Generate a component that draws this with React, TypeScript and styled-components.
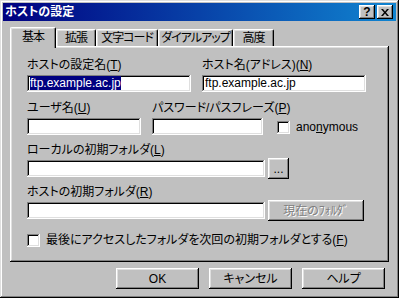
import React from "react";
import styled, { createGlobalStyle, css } from "styled-components";

const GlobalStyle = createGlobalStyle`
  html, body {
    margin: 0;
    padding: 0;
    background: #c0c0c0;
  }
  body {
    font-family: "Liberation Sans", "Noto Sans CJK JP", sans-serif;
    font-size: 12px;
    font-feature-settings: "palt";
    color: #000;
  }
`;

const raised = css`
  box-shadow: inset -1px -1px #000, inset 1px 1px #fff, inset -2px -2px #808080,
    inset 2px 2px #dfdfdf;
`;

const sunken = css`
  box-shadow: inset -1px -1px #fff, inset 1px 1px #808080, inset -2px -2px #dfdfdf,
    inset 2px 2px #000;
`;

const tabs = [
  { label: "基本", width: 46 },
  { label: "拡張", width: 40 },
  { label: "文字コード", width: 62 },
  { label: "ダイアルアップ", width: 75 },
  { label: "高度", width: 41 },
];

export default function App() {
  return (
    <>
      <GlobalStyle />
      <Window>
        <TitleBar>
          <TitleText>ホストの設定</TitleText>
          <TitleButton>?</TitleButton>
          <TitleButton>
            <svg width="8" height="7" viewBox="0 0 8 7">
              <path d="M0 0h2l2 2.5L6 0h2L5 3.5 8 7H6L4 4.5 2 7H0l3-3.5z" fill="#000" />
            </svg>
          </TitleButton>
        </TitleBar>

        <Body>
          <TabRow>
            {tabs.map((t, i) => (
              <Tab key={t.label} $width={t.width} $active={i === 0}>
                {t.label}
              </Tab>
            ))}
          </TabRow>

          <Panel>
            <FieldRow>
              <Field $width={164}>
                <Label>
                  ホストの設定名(<u>T</u>)
                </Label>
                <TextBox>
                  <Selected>ftp.example.ac.jp</Selected>
                </TextBox>
              </Field>
              <Field $width={164}>
                <Label>
                  ホスト名(アドレス)(<u>N</u>)
                </Label>
                <TextBox>ftp.example.ac.jp</TextBox>
              </Field>
            </FieldRow>

            <FieldRow>
              <Field $width={114}>
                <Label>
                  ユーザ名(<u>U</u>)
                </Label>
                <TextBox />
              </Field>
              <Field $width={111}>
                <Label>
                  パスワード/パスフレーズ(<u>P</u>)
                </Label>
                <TextBox />
              </Field>
              <CheckLine $inline>
                <CheckBox />
                <span>
                  ano<u>n</u>ymous
                </span>
              </CheckLine>
            </FieldRow>

            <FieldRow>
              <Field $width={238}>
                <Label>
                  ローカルの初期フォルダ(<u>L</u>)
                </Label>
                <TextBox />
              </Field>
              <SideButton $width={21}>...</SideButton>
            </FieldRow>

            <FieldRow>
              <Field $width={238}>
                <Label>
                  ホストの初期フォルダ(<u>R</u>)
                </Label>
                <TextBox />
              </Field>
              <SideButton $width={96} $disabled>
                現在のﾌｫﾙﾀﾞ
              </SideButton>
            </FieldRow>

            <CheckLine>
              <CheckBox />
              <span>
                最後にアクセスしたフォルダを次回の初期フォルダとする(<u>F</u>)
              </span>
            </CheckLine>
          </Panel>

          <ButtonRow>
            <PushButton $width={83}>OK</PushButton>
            <PushButton $width={83}>キャンセル</PushButton>
            <PushButton $width={83}>ヘルプ</PushButton>
          </ButtonRow>
        </Body>
      </Window>
    </>
  );
}

const Window = styled.div`
  width: 399px;
  height: 298px;
  box-sizing: border-box;
  padding: 3px;
  background: #c0c0c0;
  box-shadow: inset -1px -1px #000, inset 1px 1px #dfdfdf, inset -2px -2px #808080,
    inset 2px 2px #fff;
`;

const TitleBar = styled.div`
  height: 18px;
  display: flex;
  align-items: center;
  padding: 0 3px 0 2px;
  background: linear-gradient(to right, #000080, #1084d0);
`;

const TitleText = styled.div`
  flex: 1;
  color: #fff;
  font-weight: bold;
  font-size: 12px;
  line-height: 18px;
`;

const TitleButton = styled.div`
  width: 16px;
  height: 14px;
  margin-left: 2px;
  display: flex;
  align-items: center;
  justify-content: center;
  background: #c0c0c0;
  font-family: "Liberation Sans", sans-serif;
  font-weight: bold;
  font-size: 12px;
  line-height: 14px;
  ${raised}
`;

const Body = styled.div`
  padding: 6px 4px 0 7px;
`;

const TabRow = styled.div`
  display: flex;
  align-items: flex-end;
  height: 19px;
`;

const Tab = styled.div<{ $width: number; $active?: boolean }>`
  width: ${(p) => p.$width}px;
  height: ${(p) => (p.$active ? 21 : 17)}px;
  margin-bottom: ${(p) => (p.$active ? -2 : 0)}px;
  box-sizing: border-box;
  display: flex;
  align-items: center;
  justify-content: center;
  padding-bottom: ${(p) => (p.$active ? 2 : 0)}px;
  background: #c0c0c0;
  border-top: 1px solid #fff;
  border-left: 1px solid #fff;
  border-right: 1px solid #000;
  border-radius: 2px 2px 0 0;
  box-shadow: inset -1px 0 #808080, inset 1px 1px #dfdfdf;
  white-space: nowrap;
  letter-spacing: -1px;
  line-height: 14px;
  ${(p) =>
    p.$active &&
    css`
      position: relative;
      z-index: 1;
    `}
`;

const Panel = styled.div`
  width: 379px;
  height: 216px;
  box-sizing: border-box;
  padding: 12px 0 0 17px;
  display: flex;
  flex-direction: column;
  gap: 8px;
  ${raised}
`;

const FieldRow = styled.div`
  display: flex;
  align-items: flex-end;
  gap: 11px;
  &:first-child {
    margin-bottom: 1px;
  }
`;

const Field = styled.div<{ $width: number }>`
  width: ${(p) => p.$width}px;
  display: flex;
  flex-direction: column;
  gap: 3px;
`;

const Label = styled.div`
  height: 14px;
  line-height: 14px;
  white-space: nowrap;
`;

const TextBox = styled.div`
  height: 17px;
  box-sizing: border-box;
  padding: 2px 3px 0;
  background: #fff;
  line-height: 13px;
  white-space: nowrap;
  overflow: hidden;
  ${sunken}
`;

const Selected = styled.span`
  background: #000080;
  color: #fff;
`;

const CheckLine = styled.label<{ $inline?: boolean }>`
  display: flex;
  align-items: center;
  gap: 6px;
  line-height: 13px;
  white-space: nowrap;
  ${(p) =>
    p.$inline
      ? css`
          margin-left: 3px;
          margin-bottom: 1px;
        `
      : css`
          margin-top: 7px;
        `}
`;

const CheckBox = styled.span`
  display: inline-block;
  width: 13px;
  height: 13px;
  flex: none;
  box-sizing: border-box;
  background: #fff;
  ${sunken}
`;

const PushButton = styled.div<{ $width: number; $disabled?: boolean }>`
  width: ${(p) => p.$width}px;
  height: 21px;
  box-sizing: border-box;
  display: flex;
  align-items: center;
  justify-content: center;
  background: #c0c0c0;
  white-space: nowrap;
  line-height: 14px;
  ${raised}
  ${(p) =>
    p.$disabled &&
    css`
      color: #808080;
      text-shadow: 1px 1px #fff;
    `}
`;

const SideButton = styled(PushButton)`
  margin-left: -8px;
  margin-bottom: -2px;
`;

const ButtonRow = styled.div`
  display: flex;
  justify-content: flex-end;
  gap: 10px;
  margin-top: 6px;
  padding-right: 7px;
`;
